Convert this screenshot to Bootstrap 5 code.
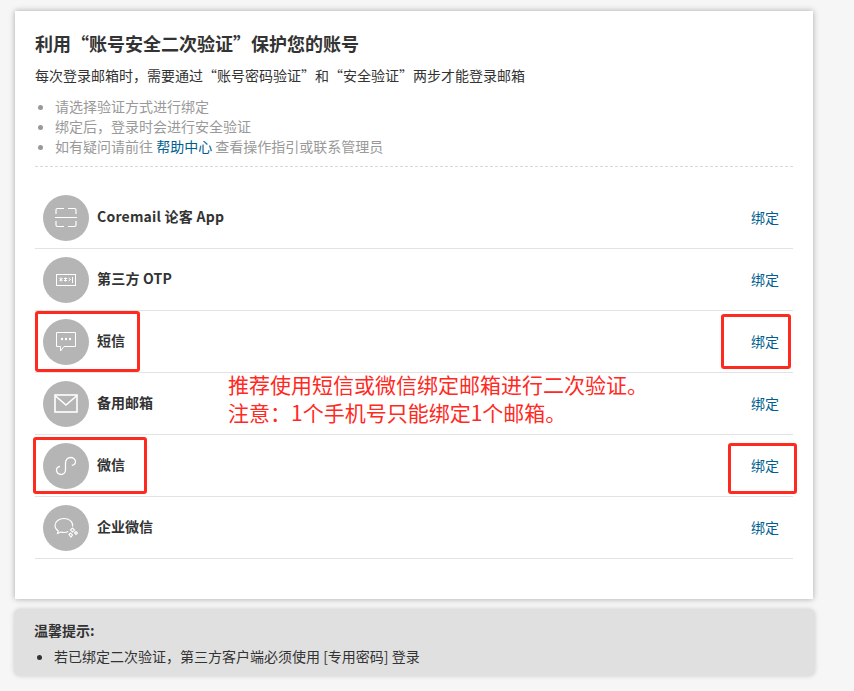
<!doctype html>
<html lang="zh-CN">
<head>
<meta charset="utf-8">
<title>二次验证</title>
<link href="https://cdn.jsdelivr.net/npm/bootstrap@5.3.0/dist/css/bootstrap.min.css" rel="stylesheet">
<style>
html,body{height:100%;overflow:hidden}
body{background:#f6f6f6;font-family:"Noto Sans CJK SC","Liberation Sans",sans-serif;font-size:14px;color:#333}
.stage{position:relative;width:854px;height:691px;padding:11px 0 0 15px}
.panel{width:798px;height:588px;background:#fff;box-shadow:0 0 6px rgba(0,0,0,.32);padding:19px 20px 0}
.head-title{font-size:18px;font-weight:700;line-height:26px;margin:0 0 9px;color:#333}
.head-sub{font-size:14px;line-height:20px;margin:0 0 11px;color:#333}
.hints{font-size:14px;line-height:20px;color:#999;margin:0;padding:0 0 10px 20px;border-bottom:1px dashed #d9d9d9}
.hints a,.bind{color:#005f8f;text-decoration:none}
.ways{margin-top:20px}
.way{height:62px;border-bottom:1px solid #e3e3e3;padding:0 14px 0 8px}
.disc{width:46px;height:46px;border-radius:50%;background:#b5b5b5;flex:none;margin-right:8px}
.way-name{font-weight:700;font-size:14px;color:#333;margin-bottom:2px}
.latin{letter-spacing:.22px}
.bind{font-size:14px}
.tipbox{width:801px;height:67px;margin:10px 0 0 -1px;background:#e0e0e0;border-radius:6px;box-shadow:0 0 5px rgba(0,0,0,.16);padding:11px 20px}
.tip-title{font-weight:700;line-height:20px;margin:0 0 6px}
.tip-list{margin:0;padding:0 0 0 20px;line-height:20px}
.ring{position:absolute;border:3px solid #ff2a1f;border-radius:3px;pointer-events:none}
.r1{left:35px;top:311px;width:105px;height:61px}
.r2{left:33px;top:437px;width:114px;height:57px}
.r3{left:721px;top:314px;width:70px;height:55px}
.r4{left:728px;top:443px;width:69px;height:51px}
.note{position:absolute;left:228px;top:370px;font-size:21px;line-height:28px;color:#ff2a1f;white-space:nowrap}
svg{display:block}
</style>
</head>
<body>
<div class="stage">
  <div class="panel">
    <h1 class="head-title">利用“账号安全二次验证”保护您的账号</h1>
    <p class="head-sub">每次登录邮箱时，需要通过“账号密码验证”和“安全验证”两步才能登录邮箱</p>
    <ul class="hints">
      <li>请选择验证方式进行绑定</li>
      <li>绑定后，登录时会进行安全验证</li>
      <li>如有疑问请前往 <a href="#">帮助中心</a> 查看操作指引或联系管理员</li>
    </ul>
    <div class="ways">
      <div class="way d-flex align-items-center">
        <div class="disc d-flex align-items-center justify-content-center">
          <svg width="24" height="21" viewBox="0 0 24 21" fill="none" stroke="#fff" stroke-width="1.200"><path d="M2 7V3Q2 1.500 3.500 1.500H10M14 1.500H20.500Q22 1.500 22 3V7M2 14V18Q2 19.500 3.500 19.500H10M14 19.500H20.500Q22 19.500 22 18V14M1 10.500H23"/></svg>
        </div>
        <span class="way-name latin">Coremail 论客 App</span>
        <a class="bind ms-auto" href="#">绑定</a>
      </div>
      <div class="way d-flex align-items-center">
        <div class="disc d-flex align-items-center justify-content-center">
          <svg width="20" height="12" viewBox="0 0 20 12" fill="none" stroke="#fff" stroke-width="1"><rect x=".5" y=".5" width="19" height="11"/><path d="M3.500 4l3 3M6.500 4l-3 3M5 3.500v4M8 4l3 3M11 4l-3 3M9.500 3.500v4M12.500 4l2 1.500-2 1.500M16.500 3v6"/></svg>
        </div>
        <span class="way-name latin">第三方 OTP</span>
        <a class="bind ms-auto" href="#">绑定</a>
      </div>
      <div class="way d-flex align-items-center">
        <div class="disc d-flex align-items-center justify-content-center">
          <svg width="22" height="22" viewBox="0 0 22 22" fill="none" stroke="#fff" stroke-width="1"><path d="M1.500 1.500H20.500V15.500H9L5.500 20V15.500H1.500Z"/><circle cx="7" cy="8" r="1.200" fill="#fff" stroke="none"/><circle cx="11" cy="8" r="1.200" fill="#fff" stroke="none"/><circle cx="15" cy="8" r="1.200" fill="#fff" stroke="none"/></svg>
        </div>
        <span class="way-name">短信</span>
        <a class="bind ms-auto" href="#">绑定</a>
      </div>
      <div class="way d-flex align-items-center">
        <div class="disc d-flex align-items-center justify-content-center">
          <svg width="24" height="19" viewBox="0 0 24 19" fill="none" stroke="#fff" stroke-width="1.600"><rect x="1" y="1" width="22" height="17"/><path d="M1.500 2L12 11 22.500 2"/></svg>
        </div>
        <span class="way-name">备用邮箱</span>
        <a class="bind ms-auto" href="#">绑定</a>
      </div>
      <div class="way d-flex align-items-center">
        <div class="disc d-flex align-items-center justify-content-center">
          <svg width="22" height="20" viewBox="0 0 22 20" fill="none" stroke="#fff" stroke-width="1.300"><path d="M10.500 7V13.500C10.500 16.500 8.500 18.500 6 18.500C3.500 18.500 1.500 16.500 1.500 14.300C1.500 12.300 3 10.800 5 10.400M10.500 7C10.500 3.500 12.800 1.500 15.500 1.500C18.200 1.500 20.500 3.300 20.500 5.700C20.500 7.800 18.800 9 16.800 9.400"/></svg>
        </div>
        <span class="way-name">微信</span>
        <a class="bind ms-auto" href="#">绑定</a>
      </div>
      <div class="way d-flex align-items-center">
        <div class="disc d-flex align-items-center justify-content-center">
          <svg width="24" height="21" viewBox="0 0 24 21" fill="none" stroke="#fff" stroke-width="1.100"><path d="M10 1.500C5 1.500 1 4.500 1 8.500C1 10.800 2.300 12.700 4.300 14L3.500 16.500L6.800 15C8 15.400 9 15.500 10 15.500C11.500 15.500 13 15.200 14.200 14.600M18.700 9.500C19.100 4.500 15 1.500 10 1.500"/><path d="M16.500 13l2-2 2 2-2 2zM20.500 16l1.500-1.500 1.500 1.500-1.500 1.500zM15 17.500l1.500-1.500 2 2-1.500 2z"/></svg>
        </div>
        <span class="way-name">企业微信</span>
        <a class="bind ms-auto" href="#">绑定</a>
      </div>
    </div>
  </div>
  <div class="tipbox">
    <p class="tip-title">温馨提示:</p>
    <ul class="tip-list">
      <li>若已绑定二次验证，第三方客户端必须使用 [专用密码] 登录</li>
    </ul>
  </div>
  <div class="note">推荐使用短信或微信绑定邮箱进行二次验证。<br>注意：1个手机号只能绑定1个邮箱。</div>
  <div class="ring r1"></div>
  <div class="ring r2"></div>
  <div class="ring r3"></div>
  <div class="ring r4"></div>
</div>
<script src="https://cdn.jsdelivr.net/npm/bootstrap@5.3.0/dist/js/bootstrap.bundle.min.js"></script>
</body>
</html>
